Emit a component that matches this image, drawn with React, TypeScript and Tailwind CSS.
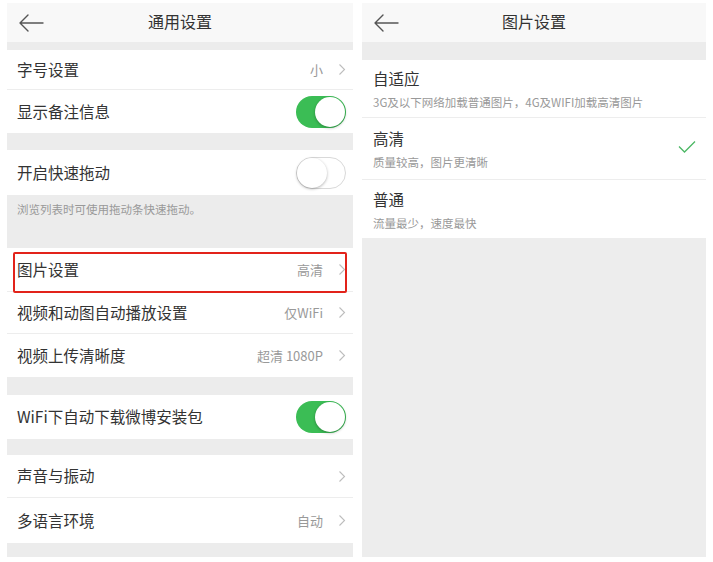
import React from "react";

const font = { fontFamily: '"Noto Sans CJK SC", "Noto Sans", sans-serif' };

function Chevron() {
  return (
    <svg width="8" height="13" viewBox="0 0 8 13" className="ml-[15px] shrink-0">
      <polyline points="1.5,1.5 6.5,6.5 1.5,11.5" fill="none" stroke="#bdbdbd" strokeWidth="1.1" />
    </svg>
  );
}

function BackArrow() {
  return (
    <svg width="26" height="18" viewBox="0 0 26 18">
      <path d="M25 9H2M10 1L2 9l8 8" fill="none" stroke="#555" strokeWidth="1.4" strokeLinecap="round" strokeLinejoin="round" />
    </svg>
  );
}

function Toggle({ on }: { on: boolean }) {
  if (on) {
    return (
      <div className="relative w-[50px] h-[32px] rounded-full bg-[#3bbd55] shrink-0">
        <div className="absolute right-[1px] top-[1px] w-[30px] h-[30px] rounded-full bg-white shadow-[0_1px_3px_rgba(0,0,0,0.3)]" />
      </div>
    );
  }
  return (
    <div className="relative w-[50px] h-[32px] rounded-full bg-white border border-[#d9d9d9] shrink-0">
      <div className="absolute left-0 top-0 w-[30px] h-[30px] rounded-full bg-white shadow-[0_1px_3px_rgba(0,0,0,0.3)]" />
    </div>
  );
}

function Row({ label, value, chevron, toggle, h, divider }: { label: string; value?: string; chevron?: boolean; toggle?: boolean | null; h: string; divider?: boolean }) {
  return (
    <div className={`${h} bg-white flex items-center pl-[10px] pr-[7px] ${divider ? "border-b border-[#ededed]" : ""}`}>
      <span className="text-[15.5px] text-[#333] flex-1">{label}</span>
      {value && <span className="text-[13px] text-[#999]">{value}</span>}
      {chevron && <Chevron />}
      {toggle !== undefined && toggle !== null && <Toggle on={toggle} />}
    </div>
  );
}

function Header({ title }: { title: string }) {
  return (
    <div className="h-[39px] bg-[#f8f8f8] flex items-center relative">
      <div className="absolute left-[11px] top-[11px]">
        <BackArrow />
      </div>
      <div className="flex-1 text-center text-[16px] text-[#333] mb-[3px]">{title}</div>
    </div>
  );
}

function Band({ h }: { h: string }) {
  return <div className={`${h} bg-[#ececec]`} />;
}

function OptionRow({ title, desc, checked, h, divider }: { title: string; desc: string; checked?: boolean; h: string; divider?: boolean }) {
  return (
    <div className={`${h} bg-white flex items-center pl-[11px] pr-[9px] ${divider ? "border-b border-[#ededed]" : ""}`}>
      <div className="flex-1 flex flex-col">
        <span className="text-[15.5px] text-[#333] leading-[20px]">{title}</span>
        <span className="text-[11.5px] text-[#999] leading-[14px] mt-[7px]">{desc}</span>
      </div>
      {checked && (
        <svg width="18" height="13" viewBox="0 0 18 13" className="mr-[1px] mb-[4px]">
          <polyline points="1,6.5 6.5,12 17,1.5" fill="none" stroke="#4cb865" strokeWidth="1.3" />
        </svg>
      )}
    </div>
  );
}

export default function App() {
  return (
    <div className="w-[713px] h-[562px] bg-white pt-[3px] flex" style={font}>
      <div className="ml-[7px] w-[346px] h-[554px] flex flex-col bg-[#ececec]">
        <Header title="通用设置" />
        <Band h="h-[8px]" />
        <Row label="字号设置" value="小" chevron h="h-[40px]" divider />
        <Row label="显示备注信息" toggle={true} h="h-[43px]" />
        <Band h="h-[17px]" />
        <Row label="开启快速拖动" toggle={false} h="h-[45px]" />
        <div className="h-[53px] bg-[#ececec] pl-[10px] pt-[6px] text-[11.5px] text-[#999]">浏览列表时可使用拖动条快速拖动。</div>
        <div className="relative">
          <Row label="图片设置" value="高清" chevron h="h-[44px]" divider />
          <div className="absolute left-[6px] right-[6px] top-[4px] bottom-[-1px] border-2 border-[#e2231a] rounded-[2px]" />
        </div>
        <Row label="视频和动图自动播放设置" value="仅WiFi" chevron h="h-[42px]" divider />
        <Row label="视频上传清晰度" value="超清 1080P" chevron h="h-[43px]" />
        <Band h="h-[18px]" />
        <Row label="WiFi下自动下载微博安装包" toggle={true} h="h-[44px]" />
        <Band h="h-[16px]" />
        <Row label="声音与振动" chevron h="h-[43px]" divider />
        <Row label="多语言环境" value="自动" chevron h="h-[45px]" />
        <Band h="h-[14px]" />
      </div>
      <div className="ml-[9px] w-[344px] h-[554px] flex flex-col bg-[#ededed]">
        <Header title="图片设置" />
        <Band h="h-[18px]" />
        <OptionRow title="自适应" desc="3G及以下网络加载普通图片，4G及WIFI加载高清图片" h="h-[58px]" divider />
        <OptionRow title="高清" desc="质量较高，图片更清晰" checked h="h-[62px]" divider />
        <OptionRow title="普通" desc="流量最少，速度最快" h="h-[58px]" />
        <div className="flex-1 bg-[#ededed]" />
      </div>
    </div>
  );
}
